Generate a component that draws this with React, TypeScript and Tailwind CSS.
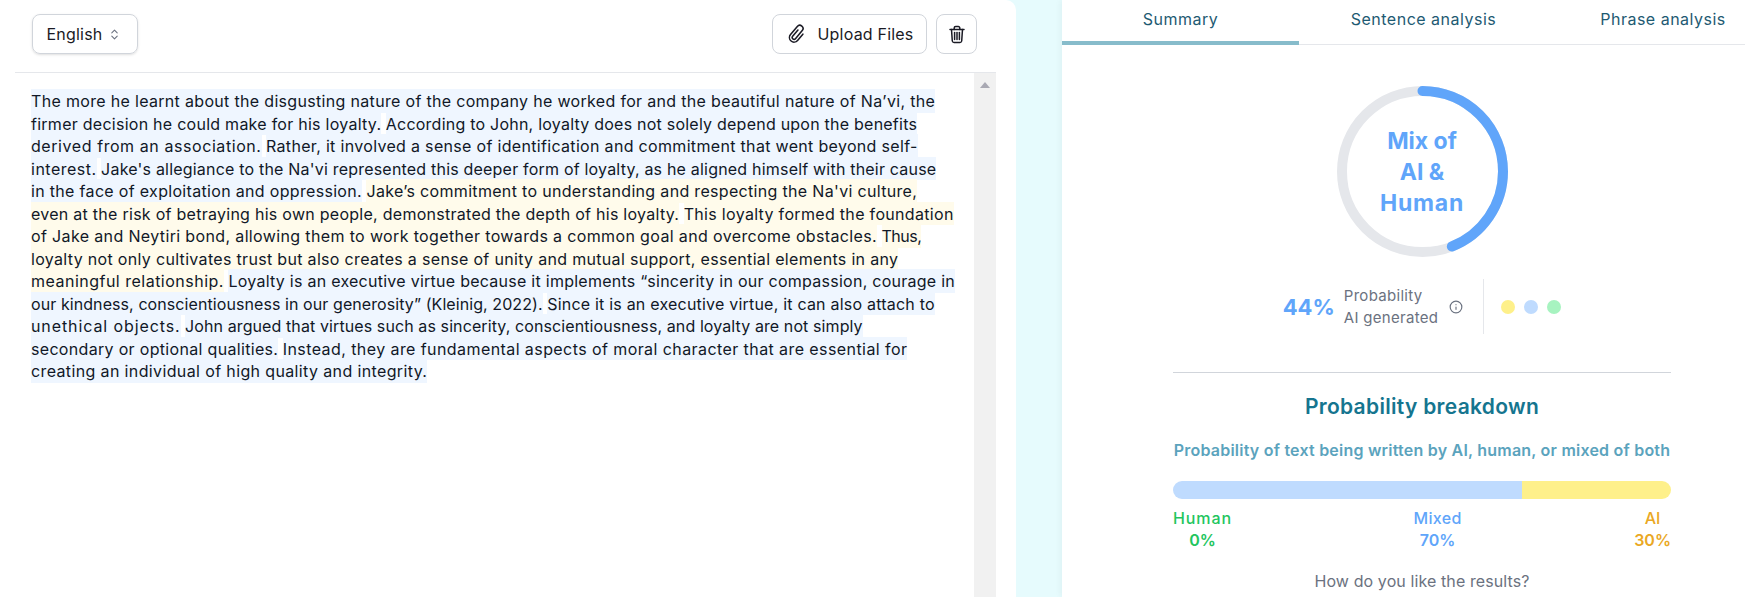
import { ChevronsUpDown, Info } from "lucide-react";

type Fragment = { t: string; k: string };
type Sentence = { c: "b" | "y"; lines: Fragment[] };

const sentences: Sentence[] = [
  { c: "b", lines: [
    { t: "The more he learnt about the disgusting nature of the company he worked for and the beautiful nature of Na’vi, the", k: "tracking-[0.32px]" },
    { t: "firmer decision he could make for his loyalty.", k: "tracking-[0.26px]" },
  ] },
  { c: "b", lines: [
    { t: "According to John, loyalty does not solely depend upon the benefits", k: "tracking-[0.23px]" },
    { t: "derived from an association.", k: "tracking-[0.57px]" },
  ] },
  { c: "b", lines: [
    { t: "Rather, it involved a sense of identification and commitment that went beyond self-", k: "tracking-[0.32px]" },
    { t: "interest.", k: "tracking-[0.5px]" },
  ] },
  { c: "b", lines: [
    { t: "Jake's allegiance to the Na'vi represented this deeper form of loyalty, as he aligned himself with their cause", k: "tracking-[0.2px]" },
    { t: "in the face of exploitation and oppression.", k: "tracking-[0.32px]" },
  ] },
  { c: "y", lines: [
    { t: "Jake’s commitment to understanding and respecting the Na'vi culture,", k: "tracking-[0.32px]" },
    { t: "even at the risk of betraying his own people, demonstrated the depth of his loyalty.", k: "tracking-[0.27px]" },
  ] },
  { c: "y", lines: [
    { t: "This loyalty formed the foundation", k: "tracking-[0.32px]" },
    { t: "of Jake and Neytiri bond, allowing them to work together towards a common goal and overcome obstacles.", k: "tracking-[0.36px]" },
  ] },
  { c: "y", lines: [
    { t: "Thus,", k: "tracking-[-0.5px]" },
    { t: "loyalty not only cultivates trust but also creates a sense of unity and mutual support, essential elements in any", k: "tracking-[0.32px]" },
    { t: "meaningful relationship.", k: "tracking-[0.49px]" },
  ] },
  { c: "b", lines: [
    { t: "Loyalty is an executive virtue because it implements “sincerity in our compassion, courage in", k: "tracking-[0.26px]" },
    { t: "our kindness, conscientiousness in our generosity” (Kleinig, 2022).", k: "tracking-[0.08px]" },
  ] },
  { c: "b", lines: [
    { t: "Since it is an executive virtue, it can also attach to", k: "tracking-[0.21px]" },
    { t: "unethical objects.", k: "tracking-[0.9px]" },
  ] },
  { c: "b", lines: [
    { t: "John argued that virtues such as sincerity, conscientiousness, and loyalty are not simply", k: "tracking-[0.1px]" },
    { t: "secondary or optional qualities.", k: "tracking-[0.32px]" },
  ] },
  { c: "b", lines: [
    { t: "Instead, they are fundamental aspects of moral character that are essential for", k: "tracking-[0.42px]" },
    { t: "creating an individual of high quality and integrity.", k: "tracking-[0.37px]" },
  ] },
];

function Ring() {
  const r = 80.5;
  const c = 2 * Math.PI * r;
  return (
    <div className="relative w-[171px] h-[171px]">
      <svg width="171" height="171" viewBox="0 0 171 171" className="-rotate-90">
        <circle cx="85.5" cy="85.5" r={r} fill="none" stroke="#e5e7eb" strokeWidth="10" />
        <circle cx="85.5" cy="85.5" r={r} fill="none" stroke="#60a5fa" strokeWidth="10" strokeLinecap="round" strokeDasharray={`${c * 0.44} ${c}`} />
      </svg>
      <div className="absolute inset-0 flex items-center justify-center text-center text-[23px] leading-[31px] font-bold text-[#60a5fa] pt-[1px]">
        <div>
          <div>Mix of</div>
          <div>AI &amp;</div>
          <div className="tracking-[0.8px]">Human</div>
        </div>
      </div>
    </div>
  );
}

function Clip() {
  return (
    <svg width="22" height="22" viewBox="0 0 24 24" fill="none" stroke="#1a1a24" strokeWidth="1.7" strokeLinecap="round" strokeLinejoin="round">
      <path transform="rotate(40 12 12)" d="M10 8V17a2 2 0 0 0 4 0V5.5a3.5 3.5 0 0 0-7 0V17a5 5 0 0 0 10 0V8" />
    </svg>
  );
}

function Trash() {
  return (
    <svg width="18" height="19" viewBox="0 0 18 19" fill="none" stroke="#1a1a24" strokeWidth="1.5" strokeLinecap="round" strokeLinejoin="round">
      <path d="M2 4.5h14" />
      <path d="M6.2 4.5V3a1.5 1.5 0 0 1 1.5-1.5h2.6A1.5 1.5 0 0 1 11.8 3v1.5" />
      <path d="M3.5 4.5l.8 11.5a1.8 1.8 0 0 0 1.8 1.5h5.8a1.8 1.8 0 0 0 1.8-1.5l.8-11.5" />
      <path d="M6.6 7.5v7" />
      <path d="M9 7.5v7" />
      <path d="M11.4 7.5v7" />
    </svg>
  );
}

export default function App() {
  return (
    <div className="flex w-[1745px] h-[597px] overflow-hidden bg-[#e6fbfd] font-['Inter',sans-serif]">
      <div className="w-[1016px] shrink-0 h-full bg-white rounded-tr-[10px] flex flex-col">
        <div className="ml-[15px] w-[981px] h-[73px] shrink-0 border-b border-[#e5e7eb] flex items-center justify-between pl-[17px] pr-[19px] pb-[4px]">
          <button className="w-[106px] h-[40px] border border-[#d1d5db] rounded-lg flex items-center justify-center gap-[6px] pr-[2px] text-[16px] tracking-[0.2px] text-[#1a1a24] shadow-sm">
            English
            <ChevronsUpDown size={13} className="text-[#6b7280]" />
          </button>
          <div className="flex items-center gap-[9px]">
            <button className="w-[155px] h-[40px] border border-[#d1d5db] rounded-lg flex items-center justify-center gap-[10px] text-[16px] tracking-[0.2px] text-[#1a1a24]">
              <Clip />
              Upload Files
            </button>
            <button className="w-[41px] h-[40px] border border-[#d1d5db] rounded-lg flex items-center justify-center">
              <Trash />
            </button>
          </div>
        </div>
        <div className="flex flex-1 min-h-0 ml-[15px] w-[981px]">
          <div className="flex-1 pl-4 pt-[17px] text-[16px] leading-[22.5px] text-[#111827] whitespace-nowrap">
            {sentences.map((s, i) => (
              <span key={i}>
                <span className={s.c === "b" ? "py-[1.6px] bg-[#eff6ff]" : "py-[1.6px] bg-[#fffbeb]"}>
                  {s.lines.map((l, j) => (
                    <span key={j} className={l.k}>
                      {l.t}
                      {j < s.lines.length - 1 ? <br /> : null}
                    </span>
                  ))}
                </span>
                {i < sentences.length - 1 ? " " : null}
              </span>
            ))}
          </div>
          <div className="w-[22px] shrink-0 bg-[#f1f1f1] flex justify-center pt-[9px]">
            <svg width="10" height="6" viewBox="0 0 10 6"><polygon points="5,0 10,6 0,6" fill="#a9a9b3" /></svg>
          </div>
        </div>
      </div>
      <div className="w-[46px] shrink-0" />
      <div className="w-[720px] shrink-0 h-full bg-white flex flex-col items-stretch shadow-[-2px_0_6px_rgba(0,0,0,0.04)] overflow-hidden">
        <div className="flex h-[45px] shrink-0 border-b border-[#e5e7eb] text-[16px] text-[#1e5a72] tracking-[0.5px]">
          <div className="w-[237px] shrink-0 h-[45px] border-b-4 border-[#87bccb] flex justify-center pt-[7px]">Summary</div>
          <div className="w-[253px] shrink-0 flex justify-center pt-[7px] pr-[4px]">Sentence analysis</div>
          <div className="w-[222px] shrink-0 flex justify-center pt-[7px]">Phrase analysis</div>
        </div>
        <div className="flex flex-col items-center pt-[41px]">
          <Ring />
          <div className="flex items-center justify-center mt-[22px] h-[55px]">
            <div className="text-[22px] font-bold text-[#60a5fa] leading-none shrink-0">44%</div>
            <div className="ml-[9px] text-[15px] leading-[22px] text-[#6b7280] tracking-[0.3px] shrink-0">Probability<br />AI generated</div>
            <Info size={14} className="ml-[11px] text-[#6b7280] shrink-0" />
            <div className="ml-[20px] h-[55px] w-px bg-[#e5e7eb] shrink-0" />
            <div className="ml-[17px] flex gap-[9px] shrink-0">
              <div className="w-[14px] h-[14px] rounded-full bg-[#fef08a]" />
              <div className="w-[14px] h-[14px] rounded-full bg-[#bfdbfe]" />
              <div className="w-[14px] h-[14px] rounded-full bg-[#a7f3c0]" />
            </div>
          </div>
          <div className="w-[498px] mt-[38px] border-t border-[#d1d5db] flex flex-col">
            <div className="text-center text-[21px] font-semibold text-[#15758f] mt-[20px] leading-[28px] tracking-[0.3px]">Probability breakdown</div>
            <div className="text-center text-[16px] font-semibold text-[#5ba3bd] mt-[18px] leading-[22px] tracking-[0.22px] whitespace-nowrap">Probability of text being written by AI, human, or mixed of both</div>
            <div className="flex h-[18px] rounded-full overflow-hidden mt-[20px]">
              <div className="w-[70%] bg-[#bfdbfe]" />
              <div className="w-[30%] bg-[#fef08a]" />
            </div>
            <div className="flex justify-between mt-[8px] text-[16px] leading-[22px] text-center">
              <div className="text-[#22c55e]">
                <div className="font-medium tracking-[0.9px]">Human</div>
                <div className="font-semibold">0%</div>
              </div>
              <div className="text-[#60a5fa] ml-[9px]">
                <div className="font-medium tracking-[0.3px]">Mixed</div>
                <div className="font-semibold">70%</div>
              </div>
              <div className="text-[#eaa823]">
                <div className="font-medium">AI</div>
                <div className="font-semibold">30%</div>
              </div>
            </div>
            <div className="text-center text-[16px] text-[#6b7280] mt-[19px] leading-[22px] tracking-[0.1px]">How do you like the results?</div>
          </div>
        </div>
      </div>
    </div>
  );
}
